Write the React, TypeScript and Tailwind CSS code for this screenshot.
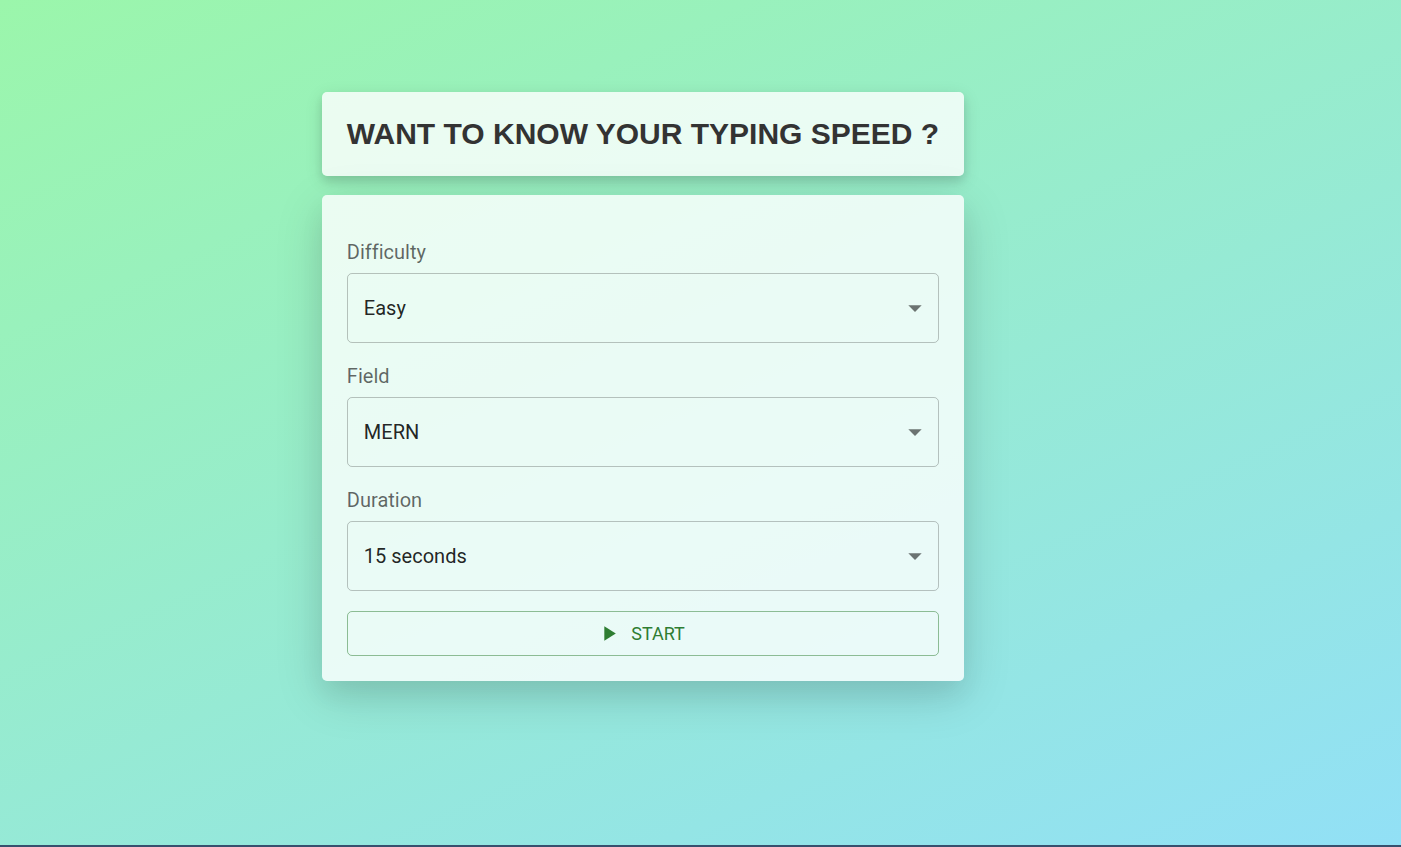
import { useId, type ReactNode } from "react";

function Panel({ className, children }: { className: string; children: ReactNode }) {
  return <section className={`rounded-[5px] bg-white/80 px-[25px] ${className}`}>{children}</section>;
}

function SelectField({ label, options }: { label: string; options: string[] }) {
  const id = useId();
  return (
    <div className="flex flex-col gap-1.5">
      <label htmlFor={id} className="text-xl leading-[30px] text-black/60 [font-variant-ligatures:none]">
        {label}
      </label>
      <div className="relative">
        <select
          id={id}
          className="block h-[70px] w-full appearance-none rounded-[5px] border border-black/[0.23] bg-transparent px-4 text-xl text-black/[0.87]"
        >
          {options.map((option) => (
            <option key={option}>{option}</option>
          ))}
        </select>
        <svg
          viewBox="0 0 24 24"
          aria-hidden="true"
          className="pointer-events-none absolute inset-y-0 right-2 my-auto size-8 fill-black/[0.54]"
        >
          <path d="M7 10l5 5 5-5z" />
        </svg>
      </div>
    </div>
  );
}

export default function App() {
  return (
    <div className="flex min-h-screen flex-col border-b-2 border-[#37506e] bg-[linear-gradient(156deg,#9bf6ab,#92e0f6)] font-['Roboto',sans-serif]">
      <main className="flex flex-col items-center pt-[92px] pr-[115px] pb-12">
        <div className="flex flex-col gap-[19px]">
          <Panel className="py-6 shadow-[0_5px_8px_rgba(0,0,0,0.09),0_5px_18px_rgba(0,0,0,0.12)]">
            <h1 className="font-['Liberation_Sans',sans-serif] text-[30px] leading-9 font-bold text-[#333333]">
              WANT TO KNOW YOUR TYPING SPEED ?
            </h1>
          </Panel>
          <Panel className="pt-[42px] pb-[25px] shadow-[0_14px_24px_rgba(0,0,0,0.06),0_14px_50px_rgba(0,0,0,0.14)]">
            <form className="flex flex-col gap-[18px]" onSubmit={(event) => event.preventDefault()}>
              <SelectField label="Difficulty" options={["Easy", "Medium", "Hard"]} />
              <SelectField label="Field" options={["MERN", "Python", "Java"]} />
              <SelectField label="Duration" options={["15 seconds", "30 seconds", "60 seconds"]} />
              <button
                type="submit"
                className="mt-0.5 flex h-[45px] items-center justify-center gap-2.5 rounded-[5px] border border-[#2e7d32]/50 text-lg text-[#2e7d32]"
              >
                <svg viewBox="0 0 24 24" aria-hidden="true" className="-ml-[5px] size-[25px] fill-current">
                  <path d="M8 5v14l11-7z" />
                </svg>
                START
              </button>
            </form>
          </Panel>
        </div>
      </main>
    </div>
  );
}
